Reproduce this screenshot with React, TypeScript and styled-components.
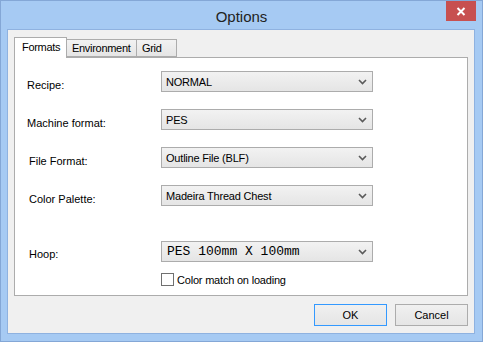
import React from 'react'
import styled, { createGlobalStyle } from 'styled-components'

const GlobalStyle = createGlobalStyle`
html, body {
  margin: 0;
  padding: 0;
  background: #a6caf3;
}
`

const rows = [
  { label: 'Recipe:', value: 'NORMAL', gap: 13, indent: 0 },
  { label: 'Machine format:', value: 'PES', gap: 17, indent: 0 },
  { label: 'File Format:', value: 'Outline File (BLF)', gap: 17, indent: 2 },
  { label: 'Color Palette:', value: 'Madeira Thread Chest', gap: 17, indent: 2 },
]

const Chevron = () => (
  <svg width="9" height="6" viewBox="0 0 9 6">
    <path d="M1 1 L4.5 4.5 L8 1" fill="none" stroke="#5a5a5a" strokeWidth="1.6" />
  </svg>
)

const Dropdown = ({ value, mono }: { value: string; mono?: boolean }) => (
  <Select>
    <SelectText mono={mono}>{value}</SelectText>
    <Chevron />
  </Select>
)

const App = () => {
  return (
    <>
      <GlobalStyle />
      <Frame>
        <TitleBar>
          <span />
          <Title>Options</Title>
          <CloseButton>
            <svg width="10" height="9" viewBox="0 0 10 9">
              <path d="M1.5 1 L8.5 8 M8.5 1 L1.5 8" stroke="#fff" strokeWidth="2" />
            </svg>
          </CloseButton>
        </TitleBar>
        <Client>
          <Tabs>
            <Tab active w={53}>Formats</Tab>
            <Tab w={70}>Environment</Tab>
            <Tab w={40}>Grid</Tab>
          </Tabs>
          <Panel>
            {rows.map((r) => (
              <Row key={r.label} gap={r.gap}>
                <Label indent={r.indent}>{r.label}</Label>
                <Dropdown value={r.value} />
              </Row>
            ))}
            <Row gap={35}>
              <Label indent={2} drop={5}>Hoop:</Label>
              <Dropdown value="PES 100mm X 100mm" mono />
            </Row>
            <CheckRow>
              <Box />
              <CheckLabel>Color match on loading</CheckLabel>
            </CheckRow>
          </Panel>
          <Buttons>
            <Button primary>OK</Button>
            <Button>Cancel</Button>
          </Buttons>
        </Client>
      </Frame>
    </>
  )
}

export default App

const Frame = styled.div`
width: 483px;
height: 342px;
box-sizing: border-box;
border: 1px solid #84a7d6;
background: #a6caf3;
display: flex;
flex-direction: column;
font-family: "Liberation Sans", Arial, sans-serif;
color: #000;
`

const TitleBar = styled.div`
height: 28px;
display: grid;
grid-template-columns: 1fr auto 1fr;
align-items: center;
`

const Title = styled.div`
font-size: 15px;
color: #222;
padding-top: 2px;
`

const CloseButton = styled.div`
justify-self: end;
align-self: start;
width: 30px;
height: 20px;
margin-right: 6px;
background: #c75050;
display: flex;
align-items: center;
justify-content: center;
`

const Client = styled.div`
flex: 1;
margin: 0 7px 7px 6px;
background: #f0f0f0;
border: 1px solid #8fb2e0;
padding: 7px 6px 0 6px;
display: flex;
flex-direction: column;
`

const Tabs = styled.div`
display: flex;
align-items: flex-end;
height: 20px;
`

const Tab = styled.div<{ active?: boolean; w: number }>`
box-sizing: border-box;
width: ${(p) => p.w}px;
height: ${(p) => (p.active ? '21px' : '18px')};
margin-bottom: ${(p) => (p.active ? '-1px' : '0')};
padding: ${(p) => (p.active ? '3px 0 0 7px' : '2px 0 0 5px')};
border: 1px solid #acacac;
border-bottom: ${(p) => (p.active ? 'none' : '1px solid #acacac')};
border-left: ${(p) => (p.active ? '1px solid #acacac' : 'none')};
background: ${(p) => (p.active ? '#fff' : 'linear-gradient(#f2f2f2, #e5e5e5)')};
font-size: 11px;
letter-spacing: -0.3px;
white-space: nowrap;
position: relative;
z-index: ${(p) => (p.active ? 1 : 0)};
`

const Panel = styled.div`
height: 239px;
box-sizing: border-box;
background: #fff;
border: 1px solid #acacac;
padding: 0 0 0 12px;
display: flex;
flex-direction: column;
`

const Row = styled.div<{ gap: number }>`
display: flex;
align-items: center;
margin-top: ${(p) => p.gap}px;
`

const Label = styled.div<{ indent: number; drop?: number }>`
width: ${(p) => 134 - p.indent}px;
padding-left: ${(p) => p.indent}px;
padding-top: ${(p) => p.drop ?? 6}px;
font-size: 11px;
`

const Select = styled.div`
width: 212px;
height: 21px;
box-sizing: border-box;
border: 1px solid #acacac;
background: linear-gradient(#f2f2f2, #e5e5e5);
display: flex;
align-items: center;
justify-content: space-between;
padding: 0 5px 0 4px;
`

const SelectText = styled.span<{ mono?: boolean }>`
font-family: ${(p) => (p.mono ? '"Liberation Mono", "DejaVu Sans Mono", monospace' : '"Liberation Sans", Arial, sans-serif')};
font-size: ${(p) => (p.mono ? '13px' : '11px')};
letter-spacing: ${(p) => (p.mono ? '0' : '-0.2px')};
padding-left: ${(p) => (p.mono ? '1px' : '0')};
`

const CheckRow = styled.div`
display: flex;
align-items: center;
margin: 11px 0 0 134px;
`

const Box = styled.div`
width: 13px;
height: 13px;
box-sizing: border-box;
border: 1px solid #707070;
background: #fff;
`

const CheckLabel = styled.span`
font-size: 11px;
margin-left: 3px;
letter-spacing: -0.2px;
`

const Buttons = styled.div`
display: flex;
justify-content: flex-end;
gap: 8px;
margin-top: 8px;
`

const Button = styled.button<{ primary?: boolean }>`
width: 73px;
height: 22px;
border: 1px solid ${(p) => (p.primary ? '#3399ff' : '#acacac')};
background: linear-gradient(#f0f0f0, #e5e5e5);
font-family: "Liberation Sans", Arial, sans-serif;
font-size: 11px;
color: #000;
padding: 0;
`
